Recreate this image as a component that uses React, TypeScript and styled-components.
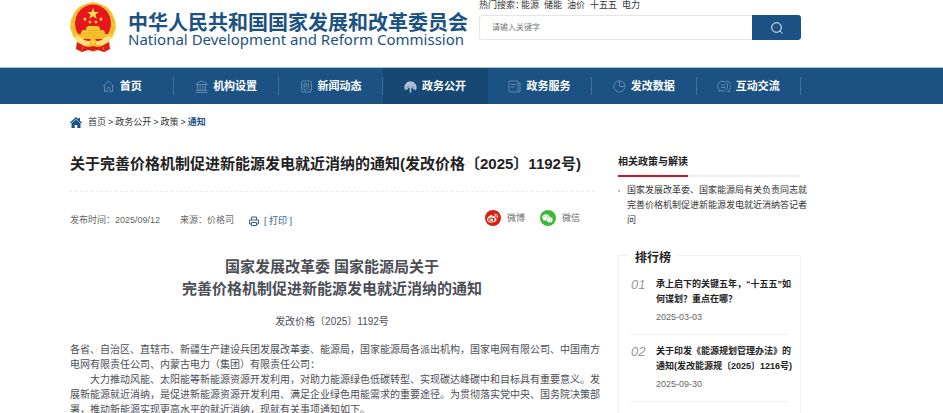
import React from "react";
import styled, { createGlobalStyle, css } from "styled-components";
import { FaWeibo, FaWeixin } from "react-icons/fa";

const BLUE = "#1b5283";

const GlobalStyle = createGlobalStyle`
  *, *::before, *::after { box-sizing: border-box; }
  html { scrollbar-width: none; }
  body {
    margin: 0;
    background: #fff;
    color: #333;
    font: 9px/15px "Liberation Sans", "Noto Sans CJK SC", sans-serif;
  }
  h1, h2, h3, p, ul, ol { margin: 0; padding: 0; }
  ul, ol { list-style: none; }
  a { color: inherit; text-decoration: none; }
  svg { display: block; flex: none; }
`;

const Page = styled.div`
  display: flex;
  flex-direction: column;
  min-height: 100vh;
`;

const gutters = css`
  padding-left: 70px;
  padding-right: 142px;
`;

const Header = styled.header`
  ${gutters}
  display: flex;
  justify-content: space-between;
  height: 67px;
`;

const Brand = styled.a`
  display: flex;
  gap: 12px;
  padding-top: 2px;
  color: ${BLUE};
  white-space: nowrap;
`;

const BrandText = styled.span`
  display: flex;
  flex-direction: column;
  padding-top: 11px;
`;

const BrandName = styled.strong`
  font-size: 20px;
  line-height: 20px;
`;

const BrandEnglish = styled.span`
  font-family: "Noto Sans", sans-serif;
  font-size: 15px;
  line-height: 12px;
`;

const SearchArea = styled.div`
  display: flex;
  flex-direction: column;
  width: 322px;
`;

const HotTerms = styled.div`
  display: flex;
  gap: 5px;
  height: 15px;
  line-height: 10px;
`;

const HotLabel = styled.span`
  margin-right: -8px;
`;

const SearchForm = styled.form`
  display: flex;
  height: 25px;
`;

const SearchInput = styled.input`
  flex: 1;
  min-width: 0;
  padding: 0 12px;
  border: 1px solid #e6e6e6;
  border-right: 0;
  border-radius: 3px 0 0 3px;
  font: inherit;
  font-size: 8px;
  &::placeholder { color: #777; }
`;

const SearchButton = styled.button`
  display: flex;
  align-items: center;
  justify-content: center;
  width: 49px;
  padding: 0;
  border: 0;
  border-radius: 0 3px 3px 0;
  background: ${BLUE};
  color: #fff;
`;

const NavBar = styled.nav`
  ${gutters}
  border-top: 1px solid #a9bfd2;
  background: ${BLUE};
`;

const NavList = styled.ul`
  display: flex;
  height: 36px;
`;

const NavItem = styled.li<{ $active?: boolean }>`
  display: flex;
  flex: 1;
  align-items: center;
  background: ${(p) => (p.$active ? "#164873" : "transparent")};
  &::after {
    content: "";
    width: 1px;
    height: 18px;
    background: ${(p) => (p.$active ? "transparent" : "#42709a")};
  }
`;

const NavLink = styled.a<{ $active?: boolean }>`
  display: flex;
  flex: 1;
  align-items: center;
  justify-content: center;
  gap: 5px;
  color: #fff;
  font-size: 11px;
  font-weight: bold;
  white-space: nowrap;
  svg { color: ${(p) => (p.$active ? "#b4c5d5" : "#6587a8")}; }
`;

const Breadcrumb = styled.nav`
  ${gutters}
  display: flex;
  align-items: center;
  gap: 2px;
  height: 36px;
  svg { margin-right: 4px; color: ${BLUE}; }
`;

const CurrentCrumb = styled.a`
  color: ${BLUE};
  font-weight: bold;
`;

const Columns = styled.main`
  ${gutters}
  display: flex;
  flex: 1;
  gap: 24px;
`;

const Article = styled.article`
  flex: 1;
  min-width: 0;
  padding-top: 12px;
  color: #4b4e55;
`;

const Title = styled.h1`
  height: 40px;
  border-bottom: 1px dashed #ececec;
  color: #222;
  font-size: 15px;
  line-height: 24px;
  white-space: nowrap;
`;

const Meta = styled.div`
  display: flex;
  align-items: center;
  gap: 20px;
  height: 56px;
  color: #666;
`;

const PrintButton = styled.button`
  display: flex;
  align-items: center;
  gap: 5px;
  padding: 2px 0 0;
  margin-left: -5px;
  border: 0;
  background: none;
  color: #2c6191;
  font: inherit;
`;

const ShareGroup = styled.div`
  display: flex;
  gap: 15px;
  margin: 0 14px 4px auto;
`;

const ShareLink = styled.a`
  display: flex;
  align-items: center;
  gap: 6px;
`;

const ShareBadge = styled.span<{ $color: string }>`
  display: flex;
  align-items: center;
  justify-content: center;
  width: 16px;
  height: 16px;
  border-radius: 50%;
  background: ${(p) => p.$color};
  color: #fff;
`;

const DocTitle = styled.h2`
  padding-top: 8px;
  font-size: 15px;
  line-height: 22px;
  text-align: center;
`;

const DocNumber = styled.p`
  padding: 14px 0 13px;
  font-size: 10px;
  text-align: center;
`;

const Paragraph = styled.p<{ $indent?: boolean }>`
  font-size: 10px;
  white-space: nowrap;
  text-indent: ${(p) => (p.$indent ? "2em" : "0")};
`;

const Sidebar = styled.aside`
  display: flex;
  flex-direction: column;
  width: 183px;
  padding-top: 10px;
`;

const SideHeading = styled.h2`
  display: flex;
  height: 27px;
  border-bottom: 2px solid #eee;
  color: #222;
  font-size: 10px;
  line-height: 24px;
`;

const SideHeadingText = styled.span`
  height: 27px;
  border-bottom: 2px solid #d0171b;
`;

const RelatedList = styled.ul`
  padding: 6px 0 27px;
`;

const RelatedItem = styled.li`
  display: flex;
  gap: 7px;
  white-space: nowrap;
  &::before {
    content: "";
    flex: none;
    width: 2px;
    height: 2px;
    margin-top: 7px;
    background: #bbb;
  }
`;

const Ranking = styled.section`
  flex: 1;
  padding: 0 12px;
  border: 1px solid #f0f0f0;
  border-bottom: 0;
`;

const RankingTitle = styled.h2`
  width: fit-content;
  margin: -8px 0 0 -3px;
  padding: 0 7px;
  background: #fff;
  color: #222;
  font-size: 12px;
  line-height: 20px;
`;

const RankItem = styled.li`
  display: grid;
  grid-template-columns: 25px 1fr;
  grid-template-rows: 33px 15px;
  height: 67px;
  padding-top: 9px;
  border-bottom: 1px solid #eee;
  white-space: nowrap;
`;

const RankNumber = styled.span`
  color: #999;
  font-size: 13px;
  font-style: italic;
`;

const RankLink = styled.a`
  color: #222;
  font-weight: bold;
`;

const RankDate = styled.time`
  grid-column: 2;
  color: #666;
`;

const Emblem = () => (
  <svg width="46" height="50" viewBox="0 0 46 50" aria-hidden="true">
    <path d="M23 0 30 2 37 5 42 11 45 18 46 26 43 34 39 39 40 47 34 50 28 48 23 50 18 48 12 50 6 47 7 39 3 34 0 26 1 18 4 11 9 5 16 2Z" fill="#f6c52c" />
    <path d="M5 14 2 21M3 25 5 32M41 14 44 21M43 25 41 32M12 5 6 11M34 5 40 11M18 2 14 4M28 2 32 4" stroke="#e8ae24" fill="none" />
    <ellipse cx="23" cy="21.500" rx="18" ry="19" fill="#e5171d" />
    <path d="m23 6 1.500 4h4.300l-3.400 2.600 1.300 4.100L23 14.200l-3.700 2.500 1.300-4.100L17.200 10h4.300Z" fill="#ffe14a" />
    <path d="m15 15 .6 1.300 1.400.2-1 1 .2 1.500-1.200-.7-1.300.7.3-1.500-1-1 1.400-.2Zm16 0 .6 1.300 1.400.2-1 1 .2 1.500-1.200-.7-1.300.7.3-1.500-1-1 1.400-.2ZM20 18l.5 1.200 1.400.1-1 1 .3 1.300-1.200-.7-1.300.7.3-1.300-1-1 1.400-.1Zm6 0 .5 1.200 1.400.1-1 1 .3 1.300-1.200-.7-1.300.7.3-1.300-1-1 1.400-.1Z" fill="#ffda3a" />
    <path d="m16 26 2-2h10l2 2v2h3l2 2v3H11v-3l2-2h3Z" fill="#f8c932" />
    <path d="M15 28.500h16M12 31h22" stroke="#e39a20" strokeWidth=".6" />
    <path d="M7 32h32l-3 5H10Z" fill="#f5bf2a" />
    <path d="M5 34q6 0 9 4l4 1h10l4-1q3-4 9-4l-2 7q-5 0-7 3l-5-2h-8l-5 2q-2-3-7-3Z" fill="#ffe083" />
    <circle cx="23" cy="40" r="3.500" fill="#f5bd2c" />
    <circle cx="23" cy="40" r="1.300" fill="#fbe487" />
    <path d="m7 40 7 4 4 1 5-1 5 1 4-1 7-4 1 7-6 3-6-2-5 1-5-1-6 2-6-3Z" fill="#dd1b1b" />
    <path d="m13 45-1 3M33 45l1 3" stroke="#f28d2b" strokeWidth=".8" />
  </svg>
);

const iconProps = { fill: "none", stroke: "currentColor", "aria-hidden": true } as const;

const HomeOutline = () => (
  <svg width="13" height="13" viewBox="0 0 13 13" {...iconProps}>
    <path d="M1 6.500 6.500 1 12 6.500M2.500 5.500v6h2.700V8.200q0-1 1.300-1t1.300 1v3.300h2.700v-6" />
  </svg>
);
const BankIcon = () => (
  <svg width="13" height="13" viewBox="0 0 13 13" {...iconProps}>
    <path d="M1 4.500v-1L6.500 1 12 3.500v1ZM2.500 5v5.500M5 5v5.500M8 5v5.500M10.500 5v5.500M1 10.500h11M.5 12.500h12" />
  </svg>
);
const NewsIcon = () => (
  <svg width="13" height="13" viewBox="0 0 13 13" {...iconProps}>
    <rect x="1.500" y="1" width="10" height="11" rx="1.500" />
    <path d="M4 3v7h2.500M4 3.500h2.500v3H4M8.500 3v4l-2 2M8.500 9.500h1.500" />
  </svg>
);
const OpenIcon = () => (
  <svg width="13" height="13" viewBox="0 0 13 13" {...iconProps}>
    <path d="M1.800 9.800A5.300 5.300 0 1 1 11.200 9.800M3.800 9.300a3.500 3.500 0 1 1 5.400 0M5.300 7.800a1.600 1.600 0 1 1 2.400 0" strokeWidth="1.500" />
    <path d="M6.500 6v6.500" strokeWidth="1.600" />
  </svg>
);
const ServiceIcon = () => (
  <svg width="13" height="13" viewBox="0 0 13 13" {...iconProps}>
    <path d="M2 1h8v9.500q0 1.500 1 1.500H2.500Q1 12 1 10.500V2q0-1 1-1ZM10 3h2v8q0 1-1 1M3 4.500h5M3 7h3.500" />
  </svg>
);
const PieIcon = () => (
  <svg width="13" height="13" viewBox="0 0 13 13" {...iconProps}>
    <path d="M8.500 1.300A5.500 5.500 0 1 0 11.800 7.500M6.500 1v5.500H12Q12 2.500 8.500 1.300" />
  </svg>
);
const ChatIcon = () => (
  <svg width="14" height="13" viewBox="0 0 14 13" {...iconProps}>
    <path d="M2 11.500V9.500A5 5 0 1 1 4 10.800ZM9 1a5 5 0 0 1 3 9v2l-2-1M4 5h4.500M4 7.500h4.500" />
  </svg>
);
const HomeSolid = () => (
  <svg width="12" height="11" viewBox="0 0 12 11" fill="currentColor" aria-hidden="true">
    <path d="M6 0 8.500 2.300V1H10v2.700L12 5.600l-.8.9L6 1.900.8 6.500 0 5.600Z" />
    <path d="m6 2.500 4.500 4V11H7.300V8H4.700v3H1.500V6.500Z" />
  </svg>
);
const PrinterIcon = () => (
  <svg width="10" height="10" viewBox="0 0 10 10" {...iconProps}>
    <path d="M2.500 4V1h5v3M2.500 8H.5V4h9v4h-2M2.500 6.500h5v3h-5Z" />
  </svg>
);
const SearchIcon = () => (
  <svg width="12" height="12" viewBox="0 0 12 12" {...iconProps}>
    <circle cx="5.500" cy="5.500" r="4.800" />
    <path d="m9 9 2.500 2.500" />
  </svg>
);

const navItems = [
  { label: "首页", Icon: HomeOutline },
  { label: "机构设置", Icon: BankIcon },
  { label: "新闻动态", Icon: NewsIcon },
  { label: "政务公开", Icon: OpenIcon, active: true },
  { label: "政务服务", Icon: ServiceIcon },
  { label: "发改数据", Icon: PieIcon },
  { label: "互动交流", Icon: ChatIcon },
];

const ranking = [
  { no: "01", lines: ["承上启下的关键五年，“十五五”如", "何谋划？重点在哪？"], date: "2025-03-03" },
  { no: "02", lines: ["关于印发《能源规划管理办法》的", "通知(发改能源规〔2025〕1216号)"], date: "2025-09-30" },
];

const Lines = ({ items }: { items: string[] }) => (
  <>
    {items.map((line, i) => (
      <React.Fragment key={line}>
        {i > 0 && <br />}
        {line}
      </React.Fragment>
    ))}
  </>
);

export default function App() {
  return (
    <Page lang="zh-CN">
      <GlobalStyle />
      <Header>
        <Brand href="#">
          <Emblem />
          <BrandText>
            <BrandName>中华人民共和国国家发展和改革委员会</BrandName>
            <BrandEnglish>National Development and Reform Commission</BrandEnglish>
          </BrandText>
        </Brand>
        <SearchArea>
          <HotTerms>
            <HotLabel>热门搜索：</HotLabel>
            {["能源", "储能", "油价", "十五五", "电力"].map((term) => (
              <a href="#" key={term}>{term}</a>
            ))}
          </HotTerms>
          <SearchForm role="search">
            <SearchInput type="text" placeholder="请输入关键字" aria-label="请输入关键字" />
            <SearchButton type="submit" aria-label="搜索"><SearchIcon /></SearchButton>
          </SearchForm>
        </SearchArea>
      </Header>

      <NavBar>
        <NavList>
          {navItems.map(({ label, Icon, active }) => (
            <NavItem key={label} $active={active}>
              <NavLink href="#" $active={active}><Icon />{label}</NavLink>
            </NavItem>
          ))}
        </NavList>
      </NavBar>

      <Breadcrumb>
        <HomeSolid />
        <a href="#">首页</a>&gt;
        <a href="#">政务公开</a>&gt;
        <a href="#">政策</a>&gt;
        <CurrentCrumb href="#">通知</CurrentCrumb>
      </Breadcrumb>

      <Columns>
        <Article>
          <Title>关于完善价格机制促进新能源发电就近消纳的通知(发改价格〔2025〕1192号)</Title>
          <Meta>
            <span>发布时间：2025/09/12</span>
            <span>来源：价格司</span>
            <PrintButton type="button"><PrinterIcon />[ 打印 ]</PrintButton>
            <ShareGroup>
              <ShareLink href="#"><ShareBadge $color="#d81e0c"><FaWeibo size={11} /></ShareBadge>微博</ShareLink>
              <ShareLink href="#"><ShareBadge $color="#3db934"><FaWeixin size={11} /></ShareBadge>微信</ShareLink>
            </ShareGroup>
          </Meta>
          <DocTitle>
            <Lines items={["国家发展改革委 国家能源局关于", "完善价格机制促进新能源发电就近消纳的通知"]} />
          </DocTitle>
          <DocNumber>发改价格〔2025〕1192号</DocNumber>
          <Paragraph>
            <Lines items={[
              "各省、自治区、直辖市、新疆生产建设兵团发展改革委、能源局，国家能源局各派出机构，国家电网有限公司、中国南方",
              "电网有限责任公司、内蒙古电力（集团）有限责任公司：",
            ]} />
          </Paragraph>
          <Paragraph $indent>
            <Lines items={[
              "大力推动风能、太阳能等新能源资源开发利用，对助力能源绿色低碳转型、实现碳达峰碳中和目标具有重要意义。发",
              "展新能源就近消纳，是促进新能源资源开发利用、满足企业绿色用能需求的重要途径。为贯彻落实党中央、国务院决策部",
              "署，推动新能源实现更高水平的就近消纳，现就有关事项通知如下。",
            ]} />
          </Paragraph>
        </Article>

        <Sidebar>
          <SideHeading><SideHeadingText>相关政策与解读</SideHeadingText></SideHeading>
          <RelatedList>
            <RelatedItem>
              <a href="#">
                <Lines items={["国家发展改革委、国家能源局有关负责同志就", "完善价格机制促进新能源发电就近消纳答记者", "问"]} />
              </a>
            </RelatedItem>
          </RelatedList>
          <Ranking>
            <RankingTitle>排行榜</RankingTitle>
            <ol>
              {ranking.map((item) => (
                <RankItem key={item.no}>
                  <RankNumber>{item.no}</RankNumber>
                  <RankLink href="#"><Lines items={item.lines} /></RankLink>
                  <RankDate dateTime={item.date}>{item.date}</RankDate>
                </RankItem>
              ))}
            </ol>
          </Ranking>
        </Sidebar>
      </Columns>
    </Page>
  );
}
